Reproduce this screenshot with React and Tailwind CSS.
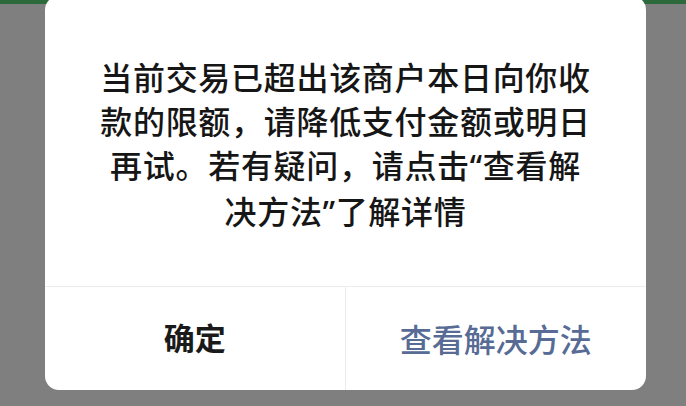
import React from "react";

const cjk = { fontFamily: '"PingFang SC", "Noto Sans CJK SC", sans-serif' };

// curly quotes drawn with a latin face so they stay narrow
function Q({ children }) {
    return <span style={{ fontFamily: '"Noto Sans", sans-serif' }}>{children}</span>;
}

function LimitDialog() {
    return (
        <div className="ml-[45px] mr-[40px] -mt-[8px] bg-white rounded-[14px] overflow-hidden" style={cjk}>
            <div className="pt-[58px] pb-[52px] px-4 text-center text-[#161616] text-[32px] leading-[44px] font-medium tracking-[0.7px]">
                <div>当前交易已超出该商户本日向你收</div>
                <div>款的限额，请降低支付金额或明日</div>
                <div>再试。若有疑问，请点击<Q>“</Q>查看解</div>
                <div>决方法<Q>”</Q>了解详情</div>
            </div>
            <div className="grid grid-cols-2 border-t border-[#ececec] h-[104px]">
                <button className="flex items-center justify-center border-r border-[#ececec] text-[31px] font-semibold text-[#1a1a1a] pb-[2px]">
                    确定
                </button>
                <button className="flex items-center justify-center text-[32px] font-medium text-[#576b95] pb-[2px]">
                    查看解决方法
                </button>
            </div>
        </div>
    );
}

export default function App() {
    return (
        <div className="w-[686px] h-[406px] bg-[#7f7f7f] overflow-hidden">
            <div className="h-[4px] bg-[#2d6a3b]"></div>
            <LimitDialog />
        </div>
    );
}
